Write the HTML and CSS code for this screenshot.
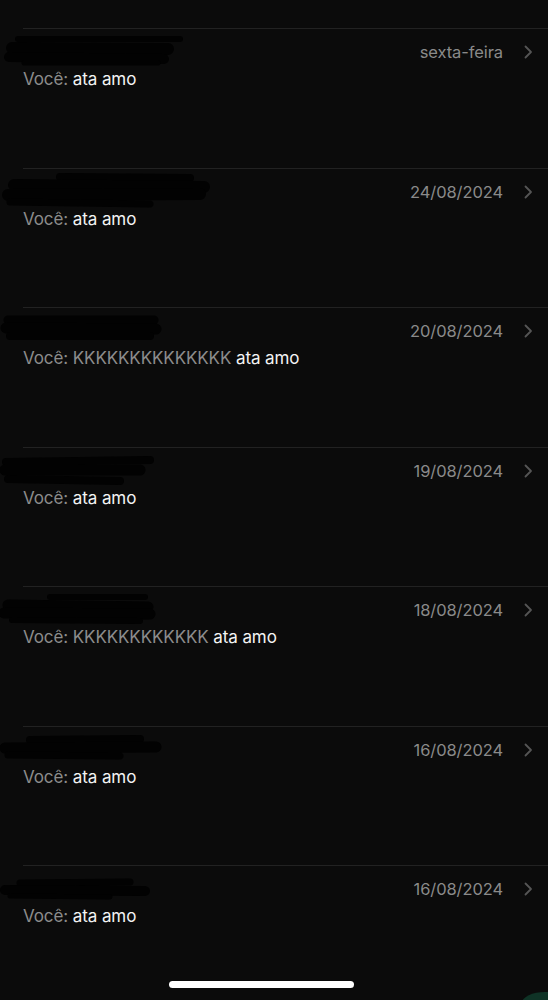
FILE: index.html
```html
<html lang="pt-BR">
  <head>
    <meta charset="utf-8" />
    <title>Conversas</title>
    <meta name="viewport" content="width=device-width,initial-scale=1" />
    <link rel="stylesheet" href="styles.css">
  </head>
  <body>
    <ul class="chats">
      <li class="chat">
        <svg class="redact" viewBox="0 0 220 44" width="220" height="44">
          <path d="M18 10 L180 10" stroke-width="6" />
          <path d="M12 19 L168 20" stroke-width="12" />
          <path d="M9 28 L164 30" stroke-width="10" />
          <path d="M24 34 L158 34" stroke-width="5" />
        </svg>
        <div class="head">
          <span class="name"></span>
          <span class="date">sexta-feira</span>
          <svg class="chev" viewBox="0 0 9 14" width="9" height="14"><path d="M1.5 1.5 L7 7 L1.5 12.5" /></svg>
        </div>
        <p class="preview"><span class="you">Você:</span> ata amo</p>
      </li>
      <li class="chat">
        <svg class="redact" viewBox="0 0 220 44" width="220" height="44">
          <path d="M60 8 L190 9" stroke-width="8" />
          <path d="M14 16 L204 18" stroke-width="12" />
          <path d="M8 26 L200 25" stroke-width="12" />
          <path d="M10 33 L150 35" stroke-width="7" />
        </svg>
        <div class="head">
          <span class="name"></span>
          <span class="date">24/08/2024</span>
          <svg class="chev" viewBox="0 0 9 14" width="9" height="14"><path d="M1.5 1.5 L7 7 L1.5 12.5" /></svg>
        </div>
        <p class="preview"><span class="you">Você:</span> ata amo</p>
      </li>
      <li class="chat">
        <svg class="redact" viewBox="0 0 220 44" width="220" height="44">
          <path d="M8 12 L154 12" stroke-width="9" />
          <path d="M6 20 L156 21" stroke-width="11" />
          <path d="M10 28 L150 28" stroke-width="8" />
        </svg>
        <div class="head">
          <span class="name"></span>
          <span class="date">20/08/2024</span>
          <svg class="chev" viewBox="0 0 9 14" width="9" height="14"><path d="M1.5 1.5 L7 7 L1.5 12.5" /></svg>
        </div>
        <p class="preview"><span class="you">Você: KKKKKKKKKKKKKK</span> ata amo</p>
      </li>
      <li class="chat">
        <svg class="redact" viewBox="0 0 220 44" width="220" height="44">
          <path d="M6 14 L150 12" stroke-width="8" />
          <path d="M5 22 L140 22" stroke-width="11" />
          <path d="M8 31 L120 33" stroke-width="8" />
        </svg>
        <div class="head">
          <span class="name"></span>
          <span class="date">19/08/2024</span>
          <svg class="chev" viewBox="0 0 9 14" width="9" height="14"><path d="M1.5 1.5 L7 7 L1.5 12.5" /></svg>
        </div>
        <p class="preview"><span class="you">Você:</span> ata amo</p>
      </li>
      <li class="chat">
        <svg class="redact" viewBox="0 0 220 44" width="220" height="44">
          <path d="M50 10 L145 10" stroke-width="6" />
          <path d="M8 18 L148 20" stroke-width="11" />
          <path d="M4 26 L150 27" stroke-width="11" />
          <path d="M12 33 L140 34" stroke-width="6" />
        </svg>
        <div class="head">
          <span class="name"></span>
          <span class="date">18/08/2024</span>
          <svg class="chev" viewBox="0 0 9 14" width="9" height="14"><path d="M1.5 1.5 L7 7 L1.5 12.5" /></svg>
        </div>
        <p class="preview"><span class="you">Você: KKKKKKKKKKKK</span> ata amo</p>
      </li>
      <li class="chat">
        <svg class="redact" viewBox="0 0 220 44" width="220" height="44">
          <path d="M30 13 L140 12" stroke-width="8" />
          <path d="M5 21 L156 20" stroke-width="11" />
          <path d="M8 28 L120 29" stroke-width="7" />
        </svg>
        <div class="head">
          <span class="name"></span>
          <span class="date">16/08/2024</span>
          <svg class="chev" viewBox="0 0 9 14" width="9" height="14"><path d="M1.5 1.5 L7 7 L1.5 12.5" /></svg>
        </div>
        <p class="preview"><span class="you">Você:</span> ata amo</p>
      </li>
      <li class="chat">
        <svg class="redact" viewBox="0 0 220 44" width="220" height="44">
          <path d="M20 17 L130 16" stroke-width="7" />
          <path d="M5 24 L145 25" stroke-width="10" />
          <path d="M10 30 L110 31" stroke-width="5" />
        </svg>
        <div class="head">
          <span class="name"></span>
          <span class="date">16/08/2024</span>
          <svg class="chev" viewBox="0 0 9 14" width="9" height="14"><path d="M1.5 1.5 L7 7 L1.5 12.5" /></svg>
        </div>
        <p class="preview"><span class="you">Você:</span> ata amo</p>
      </li>
    </ul>
    <div class="home-bar"></div>
    <div class="corner"></div>
  </body>
</html>
```

FILE: styles.css
```css
html,
body {
  margin: 0;
  padding: 0;
  width: 100%;
  height: 100%;
  overflow: hidden;
  background-color: #0b0b0b;
  font-family: Inter, "Liberation Sans", Arial, sans-serif;
  position: relative;
}

.chats {
  list-style: none;
  margin: 0;
  padding: 28px 0 0 0;
}

.chat {
  position: relative;
  box-sizing: border-box;
  height: 139.5px;
  margin-left: 23px;
  padding: 12px 15px 0 0;
  border-top: 1px solid #222;
}

.redact {
  position: absolute;
  left: -23px;
  top: 0;
  overflow: visible;
}

.redact path {
  fill: none;
  stroke: #020202;
  stroke-linecap: round;
}

.head {
  display: flex;
  align-items: center;
  height: 22px;
}

.name {
  flex: 1;
}

.date {
  font-size: 16.5px;
  line-height: 22px;
  color: #8a8a8a;
  letter-spacing: -0.1px;
}

.chev {
  margin-left: 21px;
}

.chev path {
  fill: none;
  stroke: #555;
  stroke-width: 1.8;
  stroke-linecap: round;
  stroke-linejoin: round;
}

.preview {
  margin: 5px 0 0 0;
  font-size: 17px;
  line-height: 22px;
  font-weight: 400;
  color: #f4f4f4;
  letter-spacing: -0.1px;
}

.you {
  color: #8c8c8c;
}

.home-bar {
  position: absolute;
  left: 169px;
  top: 981px;
  width: 185px;
  height: 7px;
  border-radius: 4px;
  background-color: #fff;
}

.corner {
  position: absolute;
  right: -20px;
  bottom: -14px;
  width: 46px;
  height: 22px;
  border-radius: 50%;
  background-color: #0f3326;
}
```
